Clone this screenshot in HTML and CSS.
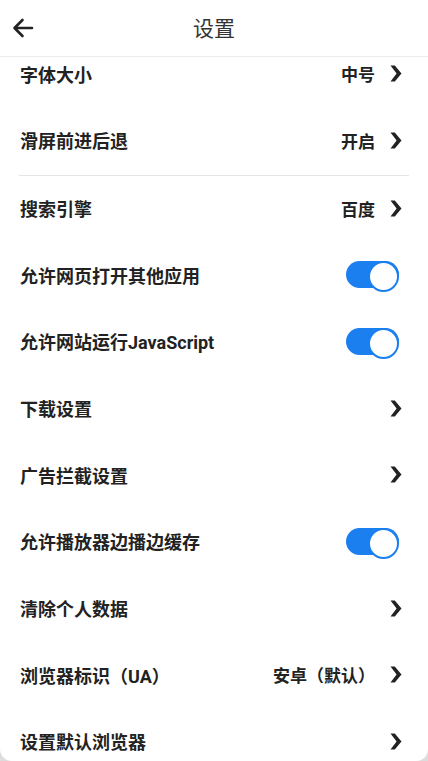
FILE: index.html
```html
<!DOCTYPE html>
<html lang="zh-CN">

<head>
    <meta charset="UTF-8">
    <meta name="viewport" content="width=device-width, initial-scale=1.0">
    <title>设置</title>
    <link rel="stylesheet" href="styles.css">
</head>

<body>
    <div class="screen">
        <div class="header">
            <button class="back-btn" aria-label="返回">
                <svg width="22" height="20" viewBox="0 0 22 20">
                    <path d="M2.5 10 H20 M10.5 2 L2.5 10 L10.5 18" fill="none" stroke="#222" stroke-width="2.6" stroke-linecap="round" stroke-linejoin="round"/>
                </svg>
            </button>
            <div class="title">设置</div>
        </div>

        <!-- Settings list (scrolled slightly under the header) -->
        <div class="scroll">
            <div class="list">
                <div class="row">
                    <span class="label">字体大小</span>
                    <span class="value">中号</span>
                    <svg class="chevron" viewBox="0 0 12 17"><polygon points="0.5,0.5 4.8,0.5 11.5,8.5 4.8,16.5 0.5,16.5 6.6,8.5"/></svg>
                </div>
                <div class="row">
                    <span class="label">滑屏前进后退</span>
                    <span class="value">开启</span>
                    <svg class="chevron" viewBox="0 0 12 17"><polygon points="0.5,0.5 4.8,0.5 11.5,8.5 4.8,16.5 0.5,16.5 6.6,8.5"/></svg>
                </div>
                <div class="divider"></div>
                <div class="row">
                    <span class="label">搜索引擎</span>
                    <span class="value">百度</span>
                    <svg class="chevron" viewBox="0 0 12 17"><polygon points="0.5,0.5 4.8,0.5 11.5,8.5 4.8,16.5 0.5,16.5 6.6,8.5"/></svg>
                </div>
                <div class="row">
                    <span class="label">允许网页打开其他应用</span>
                    <span class="switch on"></span>
                </div>
                <div class="row">
                    <span class="label">允许网站运行JavaScript</span>
                    <span class="switch on"></span>
                </div>
                <div class="row">
                    <span class="label">下载设置</span>
                    <svg class="chevron" viewBox="0 0 12 17"><polygon points="0.5,0.5 4.8,0.5 11.5,8.5 4.8,16.5 0.5,16.5 6.6,8.5"/></svg>
                </div>
                <div class="row">
                    <span class="label">广告拦截设置</span>
                    <svg class="chevron" viewBox="0 0 12 17"><polygon points="0.5,0.5 4.8,0.5 11.5,8.5 4.8,16.5 0.5,16.5 6.6,8.5"/></svg>
                </div>
                <div class="row">
                    <span class="label">允许播放器边播边缓存</span>
                    <span class="switch on"></span>
                </div>
                <div class="row">
                    <span class="label">清除个人数据</span>
                    <svg class="chevron" viewBox="0 0 12 17"><polygon points="0.5,0.5 4.8,0.5 11.5,8.5 4.8,16.5 0.5,16.5 6.6,8.5"/></svg>
                </div>
                <div class="row">
                    <span class="label">浏览器标识（UA）</span>
                    <span class="value">安卓（默认）</span>
                    <svg class="chevron" viewBox="0 0 12 17"><polygon points="0.5,0.5 4.8,0.5 11.5,8.5 4.8,16.5 0.5,16.5 6.6,8.5"/></svg>
                </div>
                <div class="row">
                    <span class="label">设置默认浏览器</span>
                    <svg class="chevron" viewBox="0 0 12 17"><polygon points="0.5,0.5 4.8,0.5 11.5,8.5 4.8,16.5 0.5,16.5 6.6,8.5"/></svg>
                </div>
            </div>
        </div>
    </div>
</body>

</html>
```

FILE: styles.css
```css
* {
  box-sizing: border-box;
}

html,
body {
  margin: 0;
  padding: 0;
  background: #dcdcdc;
}

body {
  font-family: Roboto, "Noto Sans CJK SC", sans-serif;
  color: #222;
}

.screen {
  width: 428px;
  height: 761px;
  background: #fff;
  border-radius: 0 0 12px 12px;
  overflow: hidden;
  display: flex;
  flex-direction: column;
}

.header {
  height: 57px;
  flex-shrink: 0;
  display: flex;
  align-items: center;
  justify-content: center;
  position: relative;
  border-bottom: 1px solid #ececec;
  background: #fff;
  z-index: 1;
}

.back-btn {
  position: absolute;
  left: 12px;
  top: 18px;
  width: 22px;
  height: 20px;
  padding: 0;
  border: none;
  background: none;
  display: flex;
}

.title {
  font-size: 21px;
  color: #333;
  margin-top: -3px;
}

.scroll {
  flex: 1;
  overflow: hidden;
}

.list {
  margin-top: -15px;
}

.row {
  height: 66.67px;
  display: flex;
  align-items: center;
  padding: 0 26px 3px 20px;
}

.label {
  flex: 1;
  font-size: 18px;
  font-weight: bold;
}

.value {
  font-size: 17px;
  font-weight: bold;
  margin-right: 15px;
}

.chevron {
  width: 12px;
  height: 17px;
  fill: #222;
}

.divider {
  height: 1px;
  margin: 0 19px;
  background: #e4e4e4;
}

.switch {
  width: 53px;
  height: 27px;
  border-radius: 14px;
  background: #ccc;
  position: relative;
  margin-right: 3px;
}

.switch.on {
  background: #1b7ff0;
}

.switch::after {
  content: "";
  position: absolute;
  top: 0;
  width: 27px;
  height: 27px;
  border-radius: 50%;
  background: #fff;
  border: 2px solid #1b7ff0;
}

.switch.on::after {
  right: 0;
}
```
